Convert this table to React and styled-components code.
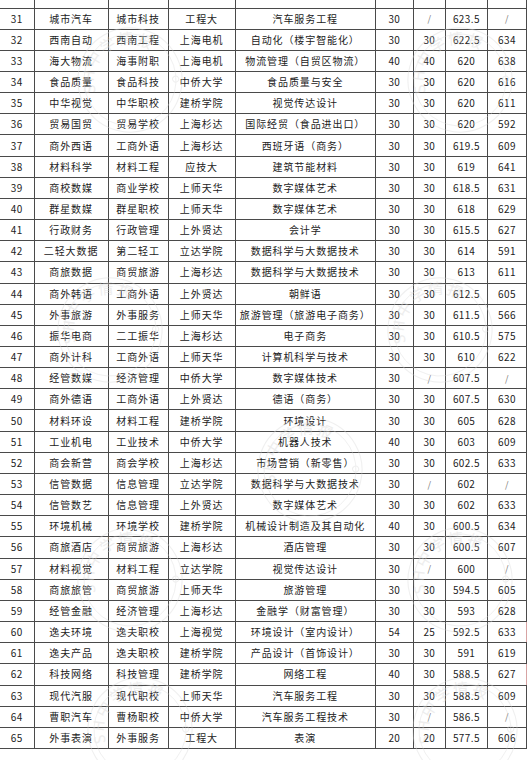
import React from "react";
import styled, { createGlobalStyle } from "styled-components";

const GlobalStyle = createGlobalStyle`
  html, body {
    margin: 0;
    padding: 0;
    background: #fff;
  }
  body {
    font-family: "Noto Sans CJK SC", "Noto Sans", sans-serif;
  }
`;

const Page = styled.div`
  position: relative;
  width: 527px;
  height: 760px;
  overflow: hidden;
  background: #fff;
`;

const Table = styled.table`
  width: 527px;
  border-collapse: collapse;
  table-layout: fixed;
`;

const Row = styled.tr`
  height: ${(p) => (p.$stub ? "8px" : "21.17px")};
`;

const Cell = styled.td`
  padding: 0;
  border: 1px solid #4a4a4a;
  border-top: ${(p) => (p.$stub ? "none" : "1px solid #4a4a4a")};
  border-left: ${(p) => (p.$first ? "none" : "1px solid #4a4a4a")};
  border-right-color: ${(p) => (p.$mark ? "#d7a3a3" : "#4a4a4a")};
  text-align: center;
  vertical-align: middle;
  color: #222;
  font-size: 10px;
  line-height: 12px;
  white-space: nowrap;
  overflow: hidden;
  letter-spacing: ${(p) => (p.$num ? "0.4px" : "0.9px")};
  font-weight: 400;
`;

const Slash = styled.span`
  color: #777;
  font-size: 9px;
`;

const Overlay = styled.svg`
  position: absolute;
  left: 0;
  top: 0;
  pointer-events: none;
`;

const widths = [34, 74, 60, 67, 140, 38, 32, 42, 39];

const rows = [
  [31, "城市汽车", "城市科技", "工程大", "汽车服务工程", "30", "/", "623.5", "/"],
  [32, "西南自动", "西南工程", "上海电机", "自动化（楼宇智能化）", "30", "30", "622.5", "634"],
  [33, "海大物流", "海事附职", "上海电机", "物流管理（自贸区物流）", "40", "40", "620", "638"],
  [34, "食品质量", "食品科技", "中侨大学", "食品质量与安全", "30", "30", "620", "616"],
  [35, "中华视觉", "中华职校", "建桥学院", "视觉传达设计", "30", "30", "620", "611"],
  [36, "贸易国贸", "贸易学校", "上海杉达", "国际经贸（食品进出口）", "30", "30", "620", "592"],
  [37, "商外西语", "工商外语", "上海杉达", "西班牙语（商务）", "30", "30", "619.5", "609"],
  [38, "材料科学", "材料工程", "应技大", "建筑节能材料", "30", "30", "619", "641"],
  [39, "商校数媒", "商业学校", "上师天华", "数字媒体艺术", "30", "30", "618.5", "631"],
  [40, "群星数媒", "群星职校", "上师天华", "数字媒体艺术", "30", "30", "618", "629"],
  [41, "行政财务", "行政管理", "上外贤达", "会计学", "30", "30", "615.5", "627"],
  [42, "二轻大数据", "第二轻工", "立达学院", "数据科学与大数据技术", "30", "30", "614", "591"],
  [43, "商旅数据", "商贸旅游", "上海杉达", "数据科学与大数据技术", "30", "30", "613", "611"],
  [44, "商外韩语", "工商外语", "上外贤达", "朝鲜语", "30", "30", "612.5", "605"],
  [45, "外事旅游", "外事服务", "上师天华", "旅游管理（旅游电子商务）", "30", "30", "611.5", "566"],
  [46, "振华电商", "二工振华", "上海杉达", "电子商务", "30", "30", "610.5", "575"],
  [47, "商外计科", "工商外语", "上师天华", "计算机科学与技术", "30", "30", "610", "622"],
  [48, "经管数媒", "经济管理", "中侨大学", "数字媒体技术", "30", "/", "607.5", "/"],
  [49, "商外德语", "工商外语", "上外贤达", "德语（商务）", "30", "30", "607.5", "630"],
  [50, "材料环设", "材料工程", "建桥学院", "环境设计", "30", "30", "605", "628"],
  [51, "工业机电", "工业技术", "中侨大学", "机器人技术", "40", "30", "603", "609"],
  [52, "商会新营", "商会学校", "上海杉达", "市场营销（新零售）", "30", "30", "602.5", "633"],
  [53, "信管数据", "信息管理", "立达学院", "数据科学与大数据技术", "30", "/", "602", "/"],
  [54, "信管数艺", "信息管理", "上外贤达", "数字媒体艺术", "30", "30", "602", "633"],
  [55, "环境机械", "环境学校", "建桥学院", "机械设计制造及其自动化", "40", "30", "600.5", "634"],
  [56, "商旅酒店", "商贸旅游", "上海杉达", "酒店管理", "30", "30", "600.5", "607"],
  [57, "材料视觉", "材料工程", "立达学院", "视觉传达设计", "30", "/", "600", "/"],
  [58, "商旅旅管", "商贸旅游", "上师天华", "旅游管理", "30", "30", "594.5", "605"],
  [59, "经管金融", "经济管理", "上海杉达", "金融学（财富管理）", "30", "30", "593", "628"],
  [60, "逸夫环境", "逸夫职校", "上海视觉", "环境设计（室内设计）", "54", "25", "592.5", "633"],
  [61, "逸夫产品", "逸夫职校", "建桥学院", "产品设计（首饰设计）", "30", "30", "591", "619"],
  [62, "科技网络", "科技管理", "建桥学院", "网络工程", "40", "30", "588.5", "627"],
  [63, "现代汽服", "现代职校", "上师天华", "汽车服务工程", "30", "30", "588.5", "609"],
  [64, "曹职汽车", "曹杨职校", "中侨大学", "汽车服务工程技术", "30", "/", "586.5", "/"],
  [65, "外事表演", "外事服务", "工程大", "表演", "20", "20", "577.5", "606"],
];

const marked = [60, 62];

const stamps = [
  [130, 80, -30],
  [460, 80, -30],
  [110, 330, -30],
  [440, 330, -30],
  [310, 470, -30],
  [130, 580, -30],
  [460, 580, -30],
  [140, 730, -30],
  [465, 730, -30],
];

function Stamp({ x, y, rot, id }) {
  return (
    <g transform={`translate(${x} ${y}) rotate(${rot})`} opacity="0.4">
      <circle r="52" fill="none" stroke="#d8d8d8" strokeWidth="1" />
      <circle r="46" fill="none" stroke="#d8d8d8" strokeWidth="0.8" />
      <path id={id} d="M -36 0 A 36 36 0 0 1 36 0" fill="none" />
      <text fontSize="15" fill="#d4d4d4" fontFamily="Noto Sans CJK SC, sans-serif" letterSpacing="2">
        <textPath href={`#${id}`} startOffset="6">SH中学情报</textPath>
      </text>
      <circle cx="40" cy="22" r="3" fill="none" stroke="#d8d8d8" />
    </g>
  );
}

const App = () => {
  return (
    <Page>
      <GlobalStyle />
      <Table>
        <colgroup>
          {widths.map((w, i) => (
            <col key={i} style={{ width: w }} />
          ))}
        </colgroup>
        <tbody>
          <Row $stub>
            {widths.map((w, i) => (
              <Cell key={i} $stub $first={i === 0} />
            ))}
          </Row>
          {rows.map((r) => (
            <Row key={r[0]}>
              {r.map((v, i) => (
                <Cell
                  key={i}
                  $first={i === 0}
                  $num={i === 0 || i > 4}
                  $mark={i === 8 && marked.includes(r[0])}
                >
                  {v === "/" ? <Slash>/</Slash> : v}
                </Cell>
              ))}
            </Row>
          ))}
        </tbody>
      </Table>
      <Overlay width="527" height="760" viewBox="0 0 527 760">
        {stamps.map(([x, y, rot], i) => (
          <Stamp key={i} x={x} y={y} rot={rot} id={`arc${i}`} />
        ))}
      </Overlay>
    </Page>
  );
};

export default App;
